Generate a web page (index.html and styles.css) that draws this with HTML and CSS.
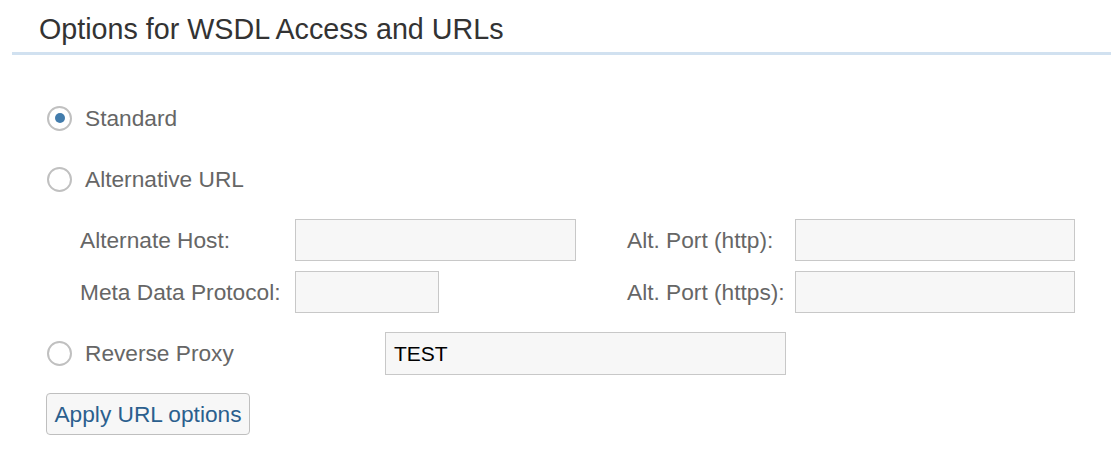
FILE: index.html
```html
<!DOCTYPE html>
<html>
<head>
<meta charset="utf-8">
<link rel="stylesheet" href="styles.css">
</head>
<body>
<div class="panel">
  <div class="header"><h1 class="title">Options for WSDL Access and URLs</h1></div>
  <div class="content">
    <div class="radio-row row-standard">
      <span class="radio checked"></span><span class="radio-label">Standard</span>
    </div>
    <div class="radio-row row-alt">
      <span class="radio"></span><span class="radio-label">Alternative URL</span>
    </div>
    <div class="fields">
      <span class="field-label">Alternate Host:</span>
      <div class="input input-host"></div>
      <span class="field-label label-right">Alt. Port (http):</span>
      <div class="input input-port"></div>
      <span class="field-label">Meta Data Protocol:</span>
      <div class="input input-meta"></div>
      <span class="field-label label-right">Alt. Port (https):</span>
      <div class="input input-port"></div>
    </div>
    <div class="radio-row row-proxy">
      <span class="radio"></span><span class="radio-label proxy-label">Reverse Proxy</span>
      <div class="input input-proxy">TEST</div>
    </div>
    <button class="btn">Apply URL options</button>
  </div>
</div>
</body>
</html>
```
FILE: styles.css
```css
html, body {
  margin: 0;
  padding: 0;
  background: #ffffff;
  font-family: "Liberation Sans", Arial, sans-serif;
}
.panel {
  width: 1111px;
}
.header {
  margin-left: 12px;
  border-bottom: 3px solid #d1e1f0;
  height: 55px;
  box-sizing: border-box;
  padding-left: 27px;
  padding-top: 15px;
}
.title {
  margin: 0;
  font-weight: normal;
  font-size: 28.7px;
  line-height: 1;
  color: #333333;
}
.content {
  padding-left: 46px;
  padding-top: 43px;
  display: flex;
  flex-direction: column;
  align-items: flex-start;
}
.radio-row {
  display: flex;
  align-items: center;
  height: 40px;
}
.row-alt { margin-top: 21px; }
.radio {
  width: 25px;
  height: 25px;
  box-sizing: border-box;
  border: 2px solid #c0c0c0;
  border-radius: 50%;
  background: #fff;
  margin-left: 1px;
  display: flex;
  align-items: center;
  justify-content: center;
}
.radio.checked::after {
  content: "";
  width: 10px;
  height: 10px;
  border-radius: 50%;
  background: #427cac;
}
.radio-label {
  margin-left: 13px;
  font-size: 22.7px;
  color: #666666;
}
.fields {
  margin-top: 20px;
  margin-left: 34px;
  display: grid;
  grid-template-columns: 215px 332px 168px 280px;
  grid-auto-rows: 42px;
  row-gap: 10px;
  align-items: center;
}
.field-label {
  font-size: 22.7px;
  color: #666666;
}
.input {
  box-sizing: border-box;
  height: 42px;
  background: #f7f7f7;
  border: 1px solid #c8c8c8;
  font-size: 21px;
  color: #000000;
  display: flex;
  align-items: center;
  padding-left: 8px;
}
.input-host { width: 281px; }
.input-port { width: 280px; }
.input-meta { width: 144px; }
.row-proxy {
  margin-top: 19px;
  height: 43px;
}
.proxy-label {
  width: 300px;
}
.input-proxy {
  width: 401px;
  height: 43px;
}
.btn {
  margin-top: 18px;
  height: 42px;
  width: 204px;
  box-sizing: border-box;
  background: #f7f7f7;
  border: 1px solid #bfbfbf;
  border-radius: 4px;
  font-family: "Liberation Sans", Arial, sans-serif;
  font-size: 22.7px;
  color: #2b5f8e;
  padding: 0;
  text-align: center;
}
```
